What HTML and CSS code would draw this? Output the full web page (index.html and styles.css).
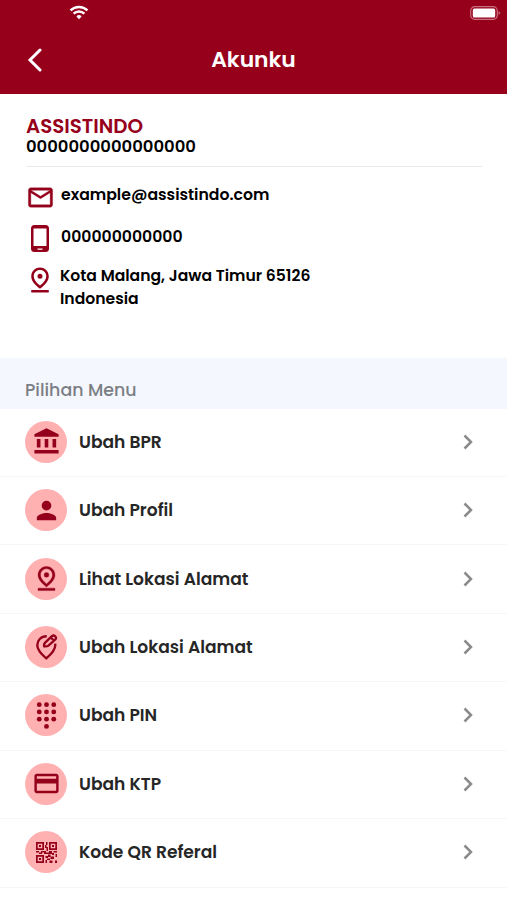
FILE: index.html
```html
<!DOCTYPE html>
<html lang="id">

<head>
    <meta charset="UTF-8">
    <meta name="viewport" content="width=device-width, initial-scale=1.0">
    <title>Akunku</title>
    <link rel="stylesheet" href="styles.css">
</head>

<body>

    <header class="header">
        <div class="status-bar">
            <svg class="wifi" viewBox="0 0 20 15">
                <path d="M1.5 5.4a12.2 12.2 0 0 1 17 0" />
                <path d="M4.6 8.6a7.8 7.8 0 0 1 10.8 0" />
                <path class="dot" d="M10 14.2l-2.6-2.8a3.7 3.7 0 0 1 5.2 0z" />
            </svg>
            <svg class="battery" viewBox="0 0 31 14">
                <rect class="shell" x=".7" y=".7" width="26.6" height="12.6" rx="4" />
                <rect class="level" x="2.8" y="2.6" width="22.4" height="8.8" rx="1.5" />
                <path class="tip" d="M28.6 5v4l1.9-2z" />
            </svg>
        </div>
        <div class="title-bar">
            <svg class="back" viewBox="0 0 16 24"><path d="M13 2L3 12l10 10" /></svg>
            <h1>Akunku</h1>
        </div>
    </header>

    <section class="profile">
        <h2>ASSISTINDO</h2>
        <p class="account">0000000000000000</p>

        <div class="contact email">
            <svg viewBox="0 0 24 24"><path d="M22 6c0-1.100-.9-2-2-2H4c-1.100 0-2 .9-2 2v12c0 1.100.9 2 2 2h16c1.100 0 2-.9 2-2V6zm-2 0l-8 5-8-5h16zm0 12H4V8l8 5 8-5v10z" /></svg>
            <span>example@assistindo.com</span>
        </div>
        <div class="contact phone">
            <svg viewBox="0 0 18 28"><path fill-rule="evenodd" d="M3.500 0h11A3.500 3.500 0 0 1 18 3.500v20a3.500 3.500 0 0 1-3.500 3.500h-11A3.500 3.500 0 0 1 0 23.500v-20A3.500 3.500 0 0 1 3.500 0zM2.500 3.500v17.500h13V3.500zM6.500 23.400v1.400h5v-1.400z" /></svg>
            <span>000000000000</span>
        </div>
        <div class="contact address">
            <svg viewBox="0 0 24 24"><use href="#pin" /></svg>
            <span>Kota Malang, Jawa Timur 65126<br>Indonesia</span>
        </div>
    </section>

    <h3 class="menu-title">Pilihan Menu</h3>

    <ul class="menu">
        <li>
            <div class="icon"><svg viewBox="0 0 24 24"><path d="M4 10h3v7H4zM10.500 10h3v7h-3zM17 10h3v7h-3zM2 19h20v3H2zM12 1L2 6v2h20V6z" /></svg></div>
            <span class="label">Ubah BPR</span>
            <svg class="arrow" viewBox="0 0 10 16"><path d="M1.500 1.500L8 8l-6.500 6.500" /></svg>
        </li>
        <li>
            <div class="icon"><svg viewBox="0 0 24 24"><path d="M12 12a4 4 0 1 0 0-8 4 4 0 0 0 0 8zm0 2c-2.670 0-8 1.340-8 4v2h16v-2c0-2.660-5.330-4-8-4z" /></svg></div>
            <span class="label">Ubah Profil</span>
            <svg class="arrow" viewBox="0 0 10 16"><path d="M1.500 1.500L8 8l-6.500 6.500" /></svg>
        </li>
        <li>
            <div class="icon"><svg class="location" viewBox="0 0 24 24">
                <path id="pin" d="M12 4c1.930 0 5 1.400 5 5.150 0 2.160-1.720 4.670-5 7.320-3.280-2.650-5-5.170-5-7.320C7 5.400 10.070 4 12 4m0-2C8.730 2 5 4.460 5 9.150c0 3.120 2.330 6.410 7 9.850 4.670-3.440 7-6.730 7-9.850C19 4.460 15.270 2 12 2zm0 5a2 2 0 1 0 0 4 2 2 0 0 0 0-4zM5 20h14v2H5z" />
            </svg></div>
            <span class="label">Lihat Lokasi Alamat</span>
            <svg class="arrow" viewBox="0 0 10 16"><path d="M1.500 1.500L8 8l-6.500 6.500" /></svg>
        </li>
        <li>
            <div class="icon"><svg class="line" viewBox="0 0 24 24">
                <path d="M12.200 2C6.900 2 3.800 5.800 3.800 9.900c0 3.700 2.700 7.200 8 11.700 5.300-4.500 8-8 8-11.700q0-.6-.1-1.300" />
                <path d="M9.900 10.900q-.3-2.100.9-3.300l6-5.600q1.500-1.300 2.900 0t.1 2.900l-6.100 5.400q-1.200 1-3.800.6zM15.800 3.100l2.900 2.900" />
            </svg></div>
            <span class="label">Ubah Lokasi Alamat</span>
            <svg class="arrow" viewBox="0 0 10 16"><path d="M1.500 1.500L8 8l-6.500 6.500" /></svg>
        </li>
        <li>
            <div class="icon"><svg viewBox="0 0 24 24">
                <circle cx="6" cy="3" r="2" /><circle cx="12" cy="3" r="2" /><circle cx="18" cy="3" r="2" />
                <circle cx="6" cy="9" r="2" /><circle cx="12" cy="9" r="2" /><circle cx="18" cy="9" r="2" />
                <circle cx="6" cy="15" r="2" /><circle cx="12" cy="15" r="2" /><circle cx="18" cy="15" r="2" />
                <circle cx="12" cy="21" r="2" />
            </svg></div>
            <span class="label">Ubah PIN</span>
            <svg class="arrow" viewBox="0 0 10 16"><path d="M1.500 1.500L8 8l-6.500 6.500" /></svg>
        </li>
        <li>
            <div class="icon"><svg viewBox="0 0 24 24"><path d="M20 4H4c-1.110 0-2 .89-2 2v12c0 1.110.89 2 2 2h16c1.110 0 2-.89 2-2V6c0-1.110-.89-2-2-2zm0 14H4v-6h16v6zm0-10H4V6h16v2z" /></svg></div>
            <span class="label">Ubah KTP</span>
            <svg class="arrow" viewBox="0 0 10 16"><path d="M1.500 1.500L8 8l-6.500 6.500" /></svg>
        </li>
        <li>
            <div class="icon"><svg class="qr" viewBox="0 0 21 21">
                <path fill-rule="evenodd" d="M0 0h8v8H0zM1.700 1.700v4.600h4.600V1.700zM13 0h8v8h-8zM14.700 1.700v4.600h4.600V1.700zM0 13h8v8H0zM1.700 14.700v4.600h4.600v-4.600z" />
                <path d="M3 3h2v2H3zM16 3h2v2h-2zM3 16h2v2H3zM10 0h1.500v3H10zM9 3h1.500v3H9zM10.500 5H12v4h-1.500zM0 9h3v1.500H0zM3 10.500h3V12H3zM5 9h5v1.500H5zM8 10.500h5V12H8zM13 9h3v3h-3zM17.500 9H21v1.500h-3.500zM16 11h2v2h-2zM19.500 12H21v3h-1.500zM9.500 14H12v2H9.500zM12 12.500h2.500V15H12zM14.500 14.500H18V17h-3.500zM9.500 18H11v3H9.500zM11 16.500h3V18h-3zM13.500 18.500h3V21h-3zM19 18.500h2V21h-2z" />
            </svg></div>
            <span class="label">Kode QR Referal</span>
            <svg class="arrow" viewBox="0 0 10 16"><path d="M1.500 1.500L8 8l-6.500 6.500" /></svg>
        </li>
    </ul>

</body>

</html>
```
FILE: styles.css
```css
* {
    margin: 0;
    padding: 0;
    box-sizing: border-box;
}

body {
    font-family: Poppins, Inter, "Open Sans", sans-serif;
    -webkit-font-smoothing: antialiased;
    color: #000;
    background-color: #fff;
    overflow: hidden;
}

svg {
    display: block;
    flex-shrink: 0;
    fill: #94001b;
}

.header {
    height: 93.5px;
    background-color: #97001b;
}

.status-bar {
    display: flex;
    justify-content: space-between;
    height: 27px;
    padding: 6px 6px 0 69px;
}

.wifi {
    width: 20px;
    height: 15px;
    margin-top: -1px;
    fill: none;
    stroke: #fff;
    stroke-width: 2.4;
}

.wifi .dot {
    fill: #fff;
    stroke: none;
}

.battery {
    width: 31px;
    height: 14px;
}

.battery .shell {
    fill: none;
    stroke: #c9707f;
    stroke-width: 1.2;
}

.battery .level {
    fill: #fff;
}

.battery .tip {
    fill: #c9707f;
}

.title-bar {
    display: grid;
    grid-template-columns: 80px 1fr 80px;
    align-items: center;
    height: 65px;
}

.back {
    width: 16px;
    height: 24px;
    margin-left: 27px;
    fill: none;
    stroke: #fff;
    stroke-width: 3;
    stroke-linecap: round;
}

.title-bar h1 {
    font-size: 21.9px;
    font-weight: 600;
    text-align: center;
    color: #fff;
}

.profile {
    height: 264.5px;
    padding: 21px 25px 0 26px;
    font-size: 15.7px;
    font-weight: 600;
}

.profile h2 {
    margin-bottom: 1px;
    font-size: 19.8px;
    font-weight: 600;
    line-height: 22px;
    color: #97001b;
}

.account {
    height: 29px;
    font-size: 16.45px;
    line-height: 18px;
    border-bottom: 1.5px solid #e9e9e9;
}

.contact {
    display: flex;
}

.email {
    height: 42px;
    margin-top: 16px;
    line-height: 23px;
}

.email svg {
    width: 29px;
    height: 29px;
    margin-right: 6px;
    stroke: #94001b;
    stroke-width: .3;
}

.phone {
    height: 39px;
    line-height: 24px;
}

.phone svg {
    width: 18px;
    height: 28px;
    margin: 0 12px 0 5px;
}

.address {
    font-size: 15.62px;
    line-height: 23px;
}

.address svg {
    width: 30px;
    height: 30px;
    margin: 1px 5px 0 -1px;
}

.menu-title {
    height: 50.5px;
    padding: 19.5px 25px 0;
    font-size: 17.4px;
    font-weight: 500;
    line-height: 24px;
    color: #7b7e83;
    background-color: #f4f7fe;
}

.menu {
    list-style: none;
}

.menu li {
    display: flex;
    align-items: center;
    height: 68.45px;
    padding: 0 34px 1px 25px;
    border-bottom: 1.5px solid #f5f6f8;
}

.icon {
    display: flex;
    align-items: center;
    justify-content: center;
    width: 42px;
    height: 42px;
    margin-right: 12px;
    border-radius: 50%;
    background-color: #ffb0b1;
}

.icon svg {
    width: 29px;
    height: 29px;
}

.icon .location {
    stroke: #94001b;
    stroke-width: .3;
}

.icon .line {
    width: 27px;
    height: 27px;
    fill: none;
    stroke: #94001b;
    stroke-width: 2.1;
}

.icon .qr {
    width: 21px;
    height: 21px;
}

.label {
    font-size: 17.1px;
    font-weight: 600;
    color: #262626;
}

.arrow {
    width: 10px;
    height: 16px;
    margin-left: auto;
    fill: none;
    stroke: #8b8b8b;
    stroke-width: 2.5;
}
```
